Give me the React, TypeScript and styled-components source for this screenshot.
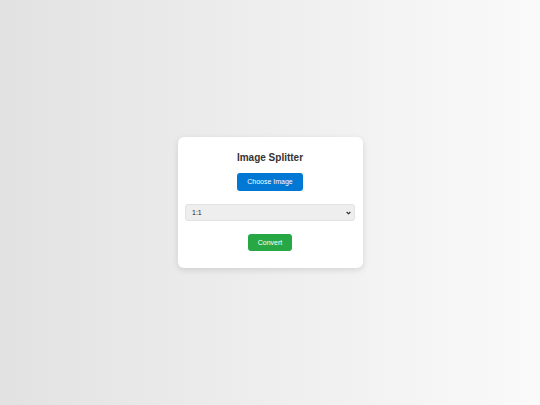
import React, {useState} from "react";
import styled, {createGlobalStyle} from "styled-components";

const GlobalStyle = createGlobalStyle`
    html, body, #root {
        margin: 0;
        padding: 0;
        height: 100%;
    }

    body {
        font-family: "Liberation Sans", Arial, sans-serif;
    }
`;

const App: React.FC = () => {
    const [ratio, setRatio] = useState("1:1");

    return (
        <>
            <GlobalStyle/>
            <PageLayout>
                <Card>
                    <Title>Image Splitter</Title>
                    <ActionButton $color="#0078d4">Choose Image</ActionButton>
                    <SelectWrap>
                        <RatioSelect value={ratio} onChange={(e) => setRatio(e.target.value)}>
                            <option value="1:1">1:1</option>
                            <option value="4:3">4:3</option>
                            <option value="16:9">16:9</option>
                        </RatioSelect>
                        <Chevron viewBox="0 0 6 4" aria-hidden="true">
                            <path d="M0.8 0.8 L3 3 L5.2 0.8" fill="none" stroke="#222" strokeWidth="1.3"/>
                        </Chevron>
                    </SelectWrap>
                    <ActionButton $color="#28a745">Convert</ActionButton>
                </Card>
            </PageLayout>
        </>
    );
}

const PageLayout = styled.div`
    width: 100%;
    height: 100%;
    display: flex;
    align-items: center;
    justify-content: center;
    background: linear-gradient(to right, #e2e2e2, #fafafa);
`;

const Card = styled.div`
    width: 185px;
    box-sizing: border-box;
    padding: 15px 8px 17px;
    background-color: white;
    border-radius: 6px;
    box-shadow: 0 2px 6px rgba(0, 0, 0, 0.12);
    display: flex;
    flex-direction: column;
    align-items: center;
`;

const Title = styled.h2`
    margin: 0 0 9px;
    font-size: 10px;
    line-height: 12px;
    font-weight: bold;
    color: #333;
`;

const ActionButton = styled.button<{ $color: string }>`
    height: 17.5px;
    padding: 0 10px;
    border: none;
    border-radius: 3px;
    background-color: ${(p) => p.$color};
    color: white;
    font-family: "Liberation Sans", Arial, sans-serif;
    font-size: 7px;
    cursor: pointer;
`;

const SelectWrap = styled.div`
    position: relative;
    width: 170px;
    margin: 13px 0;
`;

const RatioSelect = styled.select`
    appearance: none;
    display: block;
    width: 100%;
    height: 17px;
    padding: 0 12px 0 6px;
    border: 1px solid #e2e2e2;
    border-radius: 3px;
    background-color: #eeeeee;
    color: #222;
    font-family: "Liberation Sans", Arial, sans-serif;
    font-size: 7px;
`;

const Chevron = styled.svg`
    position: absolute;
    right: 4px;
    top: 7px;
    width: 5px;
    height: 4px;
    pointer-events: none;
`;

export default App;
